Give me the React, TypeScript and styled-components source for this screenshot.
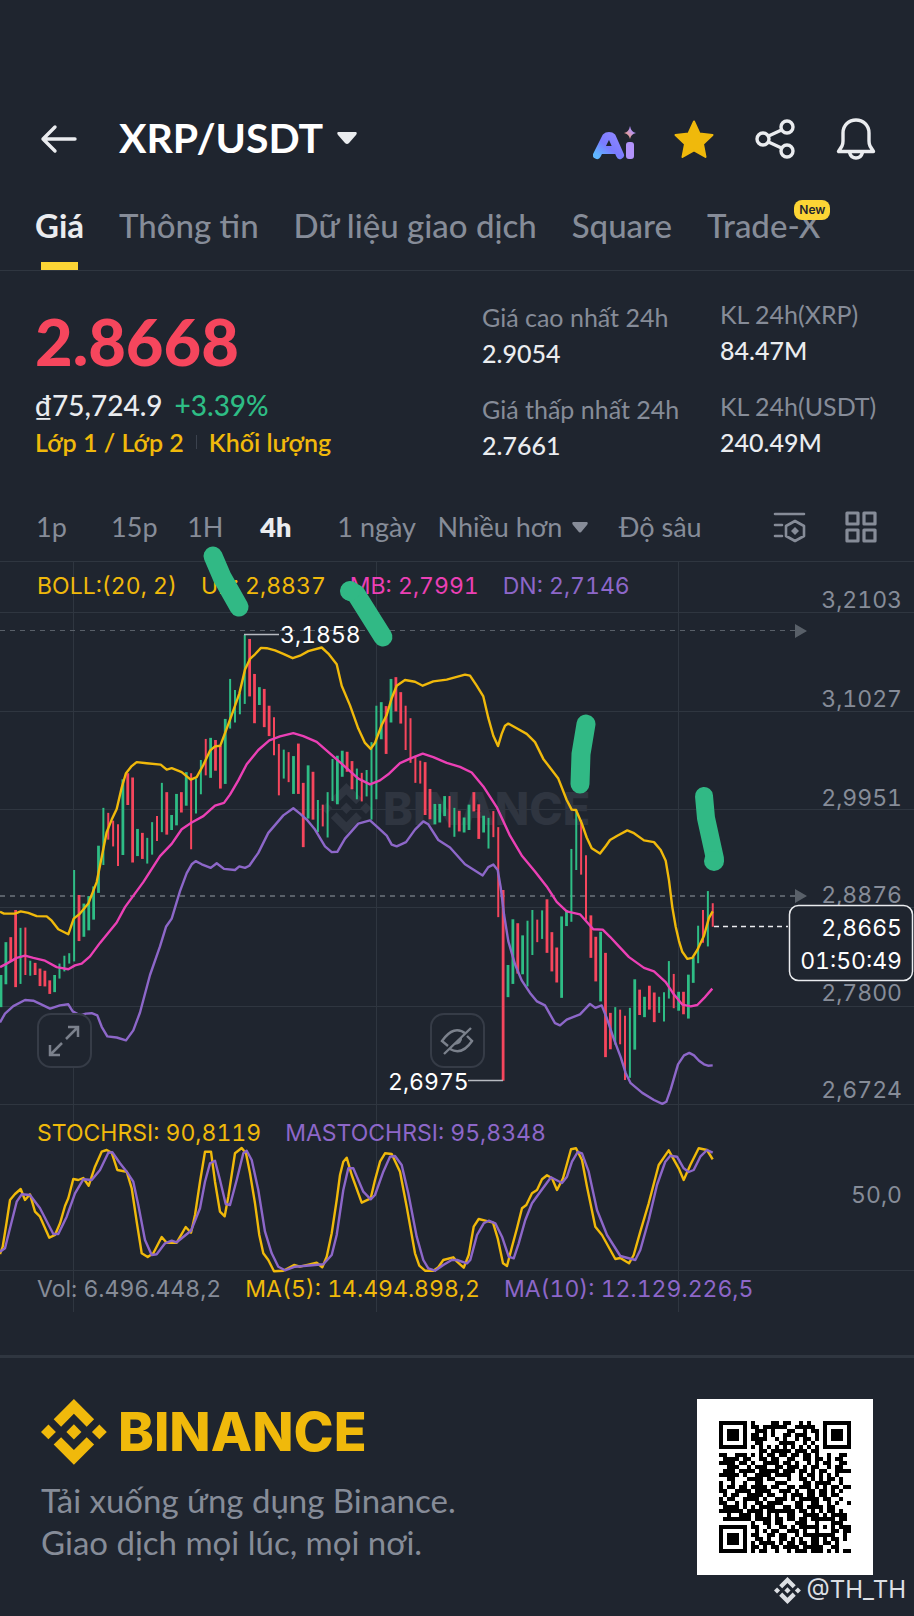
import React from "react";
import styled, { createGlobalStyle } from "styled-components";

const c = {
  bg: "#1f252f",
  line: "#2f3640",
  text: "#eaecef",
  white: "#ffffff",
  muted: "#868c98",
  up: "#2ebd85",
  down: "#f6465d",
  yellow: "#f0b90b",
  bright: "#fcd535",
  pink: "#eb40b5",
  purple: "#8d67c9",
};

const textFont = `"Lato", "Noto Sans", sans-serif`;
const chartFont = `"Inter", "Noto Sans", sans-serif`;

const GlobalStyle = createGlobalStyle`
  *, *::before, *::after { box-sizing: border-box; }
  body { margin: 0; background: ${c.bg}; }
  button { font: inherit; color: inherit; background: none; border: 0; padding: 0; cursor: pointer; }
  a { color: inherit; text-decoration: none; }
  svg { display: block; }
`;

const Page = styled.main`
  position: relative;
  min-height: 100vh;
  background: ${c.bg};
  color: ${c.text};
  font-family: ${textFont};
  overflow-x: hidden;
`;

const Header = styled.header`
  display: flex;
  align-items: center;
  padding: 112px 38px 0 40px;
`;

const IconButton = styled.button`
  display: grid;
  place-items: center;
  width: 40px;
  height: 54px;
`;

const PairButton = styled.button`
  display: flex;
  align-items: center;
  gap: 14px;
  margin-left: 39px;
  padding-bottom: 2px;
  color: ${c.white};
  font-size: 41px;
  line-height: 52px;
  font-weight: 700;
`;

const Actions = styled.div`
  display: flex;
  gap: 41px;
  margin-left: auto;
`;

const Tabs = styled.nav`
  display: flex;
  gap: 35px;
  margin-top: 41px;
  padding: 0 35px;
  border-bottom: 1px solid ${c.line};
  white-space: nowrap;
`;

const Tab = styled.a<{ $active?: boolean }>`
  position: relative;
  padding-bottom: 27px;
  font-size: 33px;
  line-height: 36px;
  font-weight: ${(p) => (p.$active ? 700 : 500)};
  color: ${(p) => (p.$active ? c.text : c.muted)};
  &::after {
    content: "";
    display: ${(p) => (p.$active ? "block" : "none")};
    position: absolute;
    left: 6px;
    right: 6px;
    bottom: 0;
    height: 8px;
    background: ${c.bright};
  }
`;

const NewBadge = styled.span`
  position: absolute;
  right: -10px;
  top: -7px;
  padding: 0 5px;
  border-radius: 8px;
  background: ${c.bright};
  color: #1f252f;
  font: 600 12px/20px ${chartFont};
`;

const Summary = styled.section`
  display: grid;
  grid-template-columns: 447fr 238fr 159fr;
  padding: 25px 35px 0;
`;

const PriceColumn = styled.div`
  padding-top: 11px;
`;

const LastPrice = styled.div`
  color: ${c.down};
  font-size: 65px;
  line-height: 68px;
  font-weight: 900;
`;

const FiatRow = styled.div`
  display: flex;
  gap: 12px;
  margin-top: 12px;
  font-size: 28px;
  line-height: 36px;
  font-weight: 500;
`;

const Change = styled.span`
  color: ${c.up};
`;

const TagRow = styled.div`
  display: flex;
  align-items: center;
  gap: 12px;
  margin-top: 1px;
  color: ${c.yellow};
  font-size: 25px;
  line-height: 36px;
  font-weight: 600;
`;

const TagDivider = styled.i`
  width: 1px;
  height: 14px;
  background: #3b424e;
`;

const Stats = styled.dl<{ $drop?: boolean }>`
  margin: 0;
  padding-top: ${(p) => (p.$drop ? 3 : 0)}px;
  font-size: 25px;
  line-height: 36px;
  white-space: nowrap;
`;

const StatName = styled.dt`
  color: ${c.muted};
`;

const StatValue = styled.dd`
  margin: 0 0 20px;
  font-weight: 500;
`;

const Periods = styled.div`
  display: grid;
  grid-template-columns: 75fr 76fr 73fr 77fr 100fr 181fr 154fr 72fr 32fr;
  align-items: center;
  justify-items: start;
  margin-top: 26px;
  padding: 0 37px 16px 36px;
  color: ${c.muted};
  font-size: 27px;
  line-height: 36px;
  white-space: nowrap;
`;

const Period = styled.button<{ $active?: boolean }>`
  display: flex;
  align-items: center;
  gap: 10px;
  color: ${(p) => (p.$active ? c.text : "inherit")};
  font-weight: ${(p) => (p.$active ? 800 : 400)};
`;

const Chart = styled.section`
  position: relative;
  padding-bottom: 43px;
  border-bottom: 3px solid ${c.line};
  font-variant-numeric: tabular-nums;
  svg text { font-family: ${chartFont}; }
`;

const Legend = styled.div<{ $top: number }>`
  position: absolute;
  left: 37px;
  top: ${(p) => p.$top}px;
  display: flex;
  gap: 24px;
  font-family: ${chartFont};
  font-size: 23px;
  line-height: 28px;
  white-space: nowrap;
`;

const LegendItem = styled.span<{ $color: string }>`
  color: ${(p) => p.$color};
`;

const Strokes = styled.svg`
  position: absolute;
  left: 0;
  top: 0;
  width: 100%;
  overflow: visible;
  pointer-events: none;
`;

const ChartButton = styled.button<{ $left: number }>`
  position: absolute;
  left: ${(p) => p.$left}%;
  top: 452px;
  display: grid;
  place-items: center;
  width: 55px;
  height: 55px;
  border: 2px solid #363c47;
  border-radius: 14px;
  background: ${c.bg};
`;

const Footer = styled.footer`
  display: flex;
  justify-content: space-between;
  padding: 41px 41px 41px;
`;

const Brand = styled.div`
  display: flex;
  align-items: center;
  gap: 11px;
  height: 66px;
  color: ${c.yellow};
  font: 800 54px/66px ${chartFont};
`;

const Tagline = styled.p`
  margin: 14px 0 0;
  color: ${c.muted};
  font-size: 33px;
  line-height: 42px;
`;

const QrCard = styled.div`
  display: grid;
  place-items: center;
  width: 176px;
  height: 176px;
  background: #fff;
`;

const Handle = styled.div`
  position: absolute;
  right: 8px;
  bottom: 8px;
  display: flex;
  align-items: center;
  gap: 6px;
  color: #dcdfe3;
  font: 400 24px/36px ${chartFont};
`;

/* Candles, oldest first: [high, low, kind]. Capitals have a wide body; g rises, r falls. */
const candles: [number, number, string][] = [
  [1190,1280,"G"],[1098,1216,"G"],[1084,1152,"R"],[1008,1224,"R"],[1058,1215,"g"],[1057,1190,"r"],[1150,1192,"g"],[1156,1190,"R"],[1172,1221,"R"],[1178,1222,"R"],
  [1205,1243,"R"],[1190,1238,"G"],[1158,1200,"g"],[1136,1180,"g"],[1129,1158,"g"],[896,1152,"g"],[966,1095,"R"],[990,1083,"G"],[969,1065,"G"],[942,1035,"G"],
  [828,960,"G"],[722,882,"g"],[736,811,"r"],[758,830,"r"],[768,885,"r"],[642,854,"G"],[625,714,"R"],[637,875,"R"],[781,857,"G"],[792,865,"R"],
  [806,878,"g"],[762,853,"g"],[745,815,"r"],[652,790,"g"],[678,797,"R"],[742,784,"G"],[683,771,"G"],[678,735,"R"],[622,716,"G"],[625,838,"r"],
  [640,738,"g"],[588,684,"g"],[529,631,"r"],[526,638,"G"],[532,618,"R"],[548,668,"R"],[473,655,"G"],[361,500,"g"],[392,483,"g"],[400,460,"g"],
  [238,431,"g"],[249,410,"R"],[347,485,"R"],[384,434,"G"],[389,496,"R"],[436,521,"R"],[468,575,"r"],[543,687,"r"],[559,640,"g"],[566,650,"r"],
  [577,683,"G"],[542,683,"R"],[652,832,"R"],[603,752,"G"],[621,755,"R"],[700,790,"g"],[713,774,"r"],[678,805,"g"],[585,703,"g"],[576,712,"G"],
  [562,635,"G"],[565,621,"R"],[591,670,"R"],[612,698,"g"],[624,704,"r"],[616,690,"g"],[538,755,"g"],[436,698,"g"],[426,530,"G"],[437,571,"R"],
  [361,483,"G"],[356,452,"R"],[398,486,"R"],[436,560,"r"],[471,596,"r"],[576,652,"r"],[590,654,"r"],[594,742,"R"],[669,754,"R"],[711,768,"G"],
  [711,763,"G"],[689,745,"G"],[689,777,"r"],[722,803,"g"],[730,788,"R"],[749,791,"G"],[713,784,"G"],[678,732,"R"],[712,809,"R"],[744,791,"G"],
  [750,836,"g"],[731,804,"r"],[776,1028,"r"],[952,1486,"R"],[1162,1252,"G"],[1034,1215,"G"],[1045,1186,"R"],[1079,1188,"G"],[1038,1222,"g"],[1008,1134,"g"],
  [1035,1098,"r"],[1009,1089,"g"],[978,1128,"R"],[1070,1180,"R"],[1113,1211,"R"],[1026,1254,"G"],[1008,1053,"G"],[837,1041,"g"],[726,896,"g"],[756,909,"r"],
  [855,1035,"r"],[1023,1142,"R"],[1083,1208,"R"],[1069,1264,"G"],[1128,1420,"R"],[1296,1398,"R"],[1280,1385,"g"],[1287,1384,"r"],[1304,1484,"r"],[1282,1478,"g"],
  [1202,1399,"G"],[1231,1302,"R"],[1251,1308,"G"],[1220,1287,"R"],[1239,1322,"R"],[1251,1296,"g"],[1238,1320,"g"],[1151,1256,"g"],[1187,1283,"r"],[1237,1290,"G"],
  [1237,1300,"R"],[1189,1312,"G"],[1140,1212,"G"],[1052,1157,"g"],[1008,1100,"r"],[955,1110,"g"],[989,1055,"r"],
];

const upper = "0,1013 12,1018 45,1018 62,1012 85,1016 110,1025 140,1026 155,1038 175,1062 205,1076 221,1032 240,1018 265,990 290,930 305,860 320,790 335,755 350,725 365,665 378,625 395,605 410,594 440,597 482,601 500,615 515,611 545,622 572,643 590,636 610,602 630,562 645,550 661,548 680,500 700,450 718,402 735,335 750,305 765,292 783,274 800,275 825,281 850,291 878,303 900,296 925,283 965,273 985,290 1010,320 1025,380 1050,435 1075,500 1095,540 1112,557 1125,540 1145,490 1160,462 1175,415 1190,380 1215,364 1245,369 1268,380 1300,368 1340,363 1395,349 1410,352 1430,380 1450,410 1465,470 1480,520 1494,549 1505,515 1515,492 1525,486 1550,499 1580,515 1605,538 1630,585 1675,640 1700,700 1715,727 1728,728 1745,765 1760,805 1775,835 1800,850 1818,828 1830,812 1852,800 1882,785 1902,793 1932,813 1962,818 1982,840 1997,870 2007,925 2017,1000 2027,1055 2037,1095 2047,1125 2062,1145 2077,1142 2092,1120 2112,1080 2127,1030 2138,1012";
const middle = "0,1168 20,1158 50,1142 75,1136 100,1142 135,1150 170,1168 205,1174 225,1163 245,1158 270,1138 300,1100 350,1043 375,1000 430,930 480,857 515,823 545,782 575,763 610,745 645,716 672,708 690,685 715,645 740,600 775,560 808,533 840,522 880,513 910,521 950,537 980,562 1010,586 1045,615 1075,640 1110,656 1140,645 1165,628 1200,597 1230,584 1268,570 1300,580 1340,596 1380,607 1415,623 1450,662 1490,720 1530,800 1565,855 1605,900 1640,942 1670,985 1700,1012 1740,1020 1780,1062 1808,1063 1830,1083 1852,1105 1887,1140 1932,1170 1962,1180 1997,1210 2022,1245 2047,1273 2072,1278 2092,1274 2112,1255 2137,1228";
const lower = "0,1323 15,1298 40,1277 75,1260 100,1262 130,1275 150,1284 180,1275 205,1272 218,1292 240,1303 258,1298 275,1297 292,1303 305,1335 322,1362 350,1365 378,1373 400,1345 420,1295 450,1190 480,1110 498,1055 515,1032 540,955 560,905 575,880 587,871 605,880 632,890 650,877 672,893 705,896 718,886 735,890 748,884 775,848 805,792 850,743 880,723 900,738 920,755 945,783 975,830 995,846 1012,845 1035,808 1075,766 1110,757 1135,778 1160,800 1175,825 1190,830 1218,818 1245,783 1270,760 1285,768 1315,812 1350,833 1395,880 1448,911 1465,888 1480,881 1493,896 1502,945 1512,1020 1525,1095 1545,1160 1565,1205 1590,1240 1611,1264 1635,1275 1665,1325 1680,1331 1700,1315 1740,1300 1770,1271 1786,1282 1805,1275 1820,1310 1842,1370 1862,1420 1877,1465 1892,1493 1927,1520 1962,1540 1987,1551 1999,1545 2012,1510 2034,1440 2052,1415 2068,1408 2082,1415 2097,1430 2112,1440 2124,1444 2138,1443";
const stoch = "0,462 8,440 20,365 30,300 45,282 62,267 75,300 90,283 105,335 120,350 148,413 165,405 180,370 195,318 205,295 220,237 235,240 250,234 266,257 285,200 305,155 320,150 335,158 352,210 380,215 395,265 410,365 425,460 443,471 460,460 485,411 500,428 530,428 557,381 573,398 585,345 600,245 615,155 633,155 645,245 660,335 674,349 685,290 705,160 725,144 738,160 750,220 765,310 778,405 790,460 805,480 822,514 850,512 882,495 900,500 950,488 967,502 980,470 995,400 1010,300 1020,225 1030,185 1040,173 1055,225 1085,308 1112,295 1125,240 1140,185 1155,160 1175,162 1200,215 1220,320 1245,460 1258,497 1275,512 1300,512 1315,502 1330,480 1360,472 1371,485 1391,503 1406,465 1421,380 1436,357 1456,362 1479,368 1493,415 1509,490 1521,498 1536,440 1551,385 1566,325 1579,315 1596,280 1611,270 1626,238 1641,226 1656,235 1671,270 1689,235 1713,148 1728,145 1746,180 1761,260 1786,380 1806,405 1846,477 1861,474 1887,490 1901,465 1921,395 1946,310 1976,195 2006,151 2036,205 2051,240 2071,195 2096,145 2121,150 2138,178";
const maStoch = "0,455 15,445 30,385 50,305 65,283 90,285 120,325 160,402 175,402 200,350 225,280 250,238 275,240 300,210 325,158 337,157 360,190 380,215 400,245 415,315 435,420 455,465 470,463 495,430 515,422 530,427 573,392 600,325 615,245 630,190 645,182 660,240 677,312 690,315 710,240 730,160 740,152 755,180 775,270 795,395 815,460 835,500 855,511 885,500 970,493 995,465 1010,405 1030,270 1045,205 1060,205 1090,275 1112,298 1125,285 1150,215 1170,170 1185,168 1205,195 1225,280 1250,410 1270,480 1285,505 1305,512 1330,495 1355,480 1371,480 1401,490 1411,480 1431,405 1451,370 1466,362 1486,370 1506,410 1526,470 1541,475 1556,430 1576,360 1596,310 1621,275 1653,232 1686,249 1701,230 1716,185 1733,156 1746,160 1766,215 1791,330 1821,405 1861,468 1906,480 1921,450 1946,360 1971,255 1996,185 2011,167 2031,170 2051,205 2066,216 2081,210 2101,170 2121,150 2138,158";

/* Source units of the two panels to chart units. */
const plot = (points: string, scaleY: number, offsetY: number) =>
  points
    .split(" ")
    .map((pair) => {
      const [x, y] = pair.split(",").map(Number);
      return `${(x / 3).toFixed(1)},${(y / scaleY + offsetY).toFixed(1)}`;
    })
    .join(" ");
const priceY = (v: number) => v / 2.8 - 11;

const axis: [string, number, number][] = [
  ["3,2103", 47, 51],
  ["3,1027", 146, 150],
  ["2,9951", 245, 248],
  ["2,8876", 342, 346],
  ["2,7800", 440, 445],
  ["2,6724", 537, 543],
];

const BinanceMark = ({ size }: { size: number }) => (
  <svg width={size} height={size} viewBox="0 0 127 127" fill="currentColor" aria-hidden="true">
    <BinancePaths />
  </svg>
);

const BinancePaths = () => (
  <>
    <path d="M38.7 53.2 63.3 28.6 87.9 53.2 102.2 38.9 63.3 0 24.4 38.9Z" />
    <path d="M0 63.3 14.3 49 28.6 63.3 14.3 77.6Z" />
    <path d="M38.7 73.4 63.3 98 87.9 73.4 102.2 87.7 63.3 126.6 24.4 87.7Z" />
    <path d="M98 63.3 112.3 49 126.6 63.3 112.3 77.6Z" />
    <path d="M77.8 63.3 63.3 48.8 48.8 63.3 63.3 77.8Z" />
  </>
);

const PriceChart = () => (
  <svg width="100%" viewBox="0 0 914 751" role="img" aria-label="XRP/USDT 4h">
    <g stroke={c.line} strokeWidth="1">
      {axis.map(([, , y]) => (
        <line key={y} x1="0" x2="914" y1={y + 0.5} y2={y + 0.5} />
      ))}
      <line x1="0" x2="914" y1="0.5" y2="0.5" />
      <line x1="0" x2="914" y1="709.5" y2="709.5" />
      {[73, 376, 678].map((x) => (
        <line key={x} x1={x + 0.5} x2={x + 0.5} y1="0" y2="751" />
      ))}
    </g>
    <g fill="#2f3540">
      <g transform="translate(321 222) scale(.4)">
        <BinancePaths />
      </g>
      <text x="383" y="264" fontSize="45" fontWeight="800">BINANCE</text>
    </g>
    <g stroke="#596069" strokeWidth="2" strokeDasharray="5 5">
      <line x1="0" x2="795" y1="69.5" y2="69.5" strokeWidth="1" />
      <line x1="0" x2="795" y1="335" y2="335" />
    </g>
    <path d="M795 63 807 70 795 77ZM795 328 807 335 795 342Z" fill="#596069" />
    {candles.map(([high, low, kind], i) => (
      <line
        key={i}
        x1={1 + i * 4.875}
        x2={1 + i * 4.875}
        y1={priceY(high)}
        y2={priceY(low)}
        stroke={kind.toLowerCase() === "g" ? c.up : c.down}
        strokeWidth={kind === kind.toUpperCase() ? 2.8 : 2}
      />
    ))}
    <g fill="none" strokeWidth="2.4" strokeLinejoin="round">
      <polyline points={plot(lower, 2.8, -11)} stroke={c.purple} />
      <polyline points={plot(middle, 2.8, -11)} stroke={c.pink} />
      <polyline points={plot(upper, 2.8, -11)} stroke={c.yellow} />
      <polyline points={plot(stoch, 3, 539)} stroke={c.yellow} />
      <polyline points={plot(maStoch, 3, 539)} stroke={c.purple} />
    </g>
    <g fill={c.muted} fontSize="23" textAnchor="end">
      {axis.map(([label, y]) => (
        <text key={label} x="902" y={y}>{label}</text>
      ))}
      <text x="902" y="642">50,0</text>
    </g>
    <g stroke="#b7bbc1" strokeWidth="1.5">
      <line x1="244" x2="279" y1="73.5" y2="73.5" />
      <line x1="468" x2="503" y1="519.5" y2="519.5" />
      <line x1="714" x2="788" y1="365.5" y2="365.5" strokeDasharray="5 4" stroke={c.text} />
    </g>
    <rect x="789.5" y="344.5" width="123" height="75" rx="9" fill={c.bg} stroke={c.text} strokeWidth="1.5" />
    <g fill={c.white} fontSize="23">
      <text x="280" y="82">3,1858</text>
      <text x="388" y="529">2,6975</text>
      <g textAnchor="end">
        <text x="902" y="375">2,8665</text>
        <text x="902" y="408">01:50:49</text>
      </g>
    </g>
  </svg>
);

const Annotations = () => (
  <Strokes viewBox="0 0 914 751" aria-hidden="true">
    <g fill="none" stroke="#31b985" strokeWidth="19" strokeLinecap="round" strokeLinejoin="round">
      <path d="M213-5 222 16 239 46" />
      <path d="M350 30 356 33 383 76" />
      <path d="M586 163 581 193 580 223" />
      <path d="M704 235 706 257 715 298" strokeWidth="18" />
    </g>
    <circle cx="350" cy="30" r="10" fill="#31b985" />
    <circle cx="714" cy="300" r="10" fill="#31b985" />
  </Strokes>
);

const qrRows = [
  "#######.#....##.##..#.#...#######",
  "#.....#.##.######..#####..#.....#",
  "#.###.#..###.#...##..#.##.#.###.#",
  "#.###.#.##.#.#..##.###..#.#.###.#",
  "#.###.#.####..#.#..#.##.#.#.###.#",
  "#.....#..##....####..#.#..#.....#",
  "#######.#.#.#.#.#.#.#.#.#.#######",
  "..........##.#####.###.##........",
  "##..###.#.#.##.##.##.##.#..#..##.",
  ".####.##..##.##..##..##.##.#.##..",
  "####.##.#..####.##.#..#.#.##..##.",
  "..###..#.###..##.###.#.##..#.##..",
  ".###.####.#####.###.##.#.##..####",
  "#####.#..####.####..#.##.#.#.#...",
  "..##...####.##...#..##.#.#.##.#..",
  "#..#..#..##...###....##.####..#..",
  "#.##.##.####.##..##.###.#.#.##.##",
  "##..####.####..###.#..##.##.#.#..",
  ".#.##..####.##..#.###.##.##.##...",
  "#.##..####.#..###.#.#####.##..#..",
  "##..#.#..##.####...##..##..#.#..#",
  ".####.#.#.####..##.##.####.##....",
  "######.####.#######.##.#.#.##.#..",
  "..#..###.##.#.#..##..####.#.####.",
  ".#######.####.##.##.##.######.##.",
  "........#..##.##...###..#...###..",
  "#######.##..#..##.#.#####.#.#.###",
  "#.....#..#.#.##..###.#..#...##.##",
  "#.###.#.##..##.##..#.########..#.",
  "#.###.#..##.#..##.#.#..##.#.##.#.",
  "#.###.#.#.####.#.##.##.##.##.#...",
  "#.....#.##.#.##.####.#####..##...",
  "#######.#.##..#..#.###.###.#.#.##",
];

const QrCode = () => (
  <svg width="132" height="132" viewBox="0 0 33 33" shapeRendering="crispEdges" role="img" aria-label="QR">
    <path
      d={qrRows
        .flatMap((row, y) => [...row].map((m, x) => (m === "#" ? `M${x} ${y}h1v1h-1z` : "")))
        .join("")}
    />
  </svg>
);

const periods = ["1p", "15p", "1H", "4h", "1 ngày"];

export default function App() {
  return (
    <Page>
      <GlobalStyle />
      <Header>
        <IconButton aria-label="Back">
          <svg width="40" height="34" viewBox="0 0 40 34" fill="none" stroke={c.text} strokeWidth="3.4" strokeLinecap="round" strokeLinejoin="round">
            <path d="M15 5 3 17 15 29M3 17H35" />
          </svg>
        </IconButton>
        <PairButton>
          XRP/USDT
          <svg width="20" height="12" viewBox="0 0 20 12" fill={c.text}>
            <path d="M1 0H19Q20.500 1 19 3L12 11Q10 13 8 11L1 3Q-.5 1 1 0Z" />
          </svg>
        </PairButton>
        <Actions>
          <IconButton aria-label="Ai">
            <svg width="44" height="42" viewBox="0 0 44 42">
              <defs>
                <linearGradient id="ai" x1="0" x2="1" y1="1" y2="0">
                  <stop offset="0" stopColor="#5fb6ff" />
                  <stop offset=".45" stopColor="#7a7bff" />
                  <stop offset="1" stopColor="#8e86ff" />
                </linearGradient>
                <linearGradient id="spark" x1="0" x2="1" y1="1" y2="0">
                  <stop offset=".2" stopColor="#f2a184" />
                  <stop offset=".7" stopColor="#ad90ff" />
                </linearGradient>
              </defs>
              <path d="M4 37 13 19Q14 18 16 18Q18 18 19 19L27 37M10 32H22" fill="none" stroke="url(#ai)" strokeWidth="8" strokeLinecap="round" strokeLinejoin="round" />
              <rect x="33" y="24" width="8" height="17" rx="3" fill="#b293fb" />
              <path d="M37 8Q38 14 43 15 38 16 37 21 36 16 31 15 36 14 37 8Z" fill="url(#spark)" />
            </svg>
          </IconButton>
          <IconButton aria-label="Favorite">
            <svg width="40" height="40" viewBox="0 0 40 40" fill={c.yellow} stroke={c.yellow} strokeWidth="2" strokeLinejoin="round">
              <path d="M20 2.500 25.500 14.500 38.500 16 29 25 31.500 38 20 31.500 8.500 38 11 25 1.500 16 14.500 14.500Z" />
            </svg>
          </IconButton>
          <IconButton aria-label="Share">
            <svg width="40" height="40" viewBox="0 0 40 40" fill="none" stroke={c.text} strokeWidth="3.4">
              <circle cx="8" cy="20" r="6" />
              <circle cx="32" cy="8" r="6" />
              <circle cx="32" cy="32" r="6" />
              <path d="M13.500 17 26.500 11M13.500 23 26.500 29" />
            </svg>
          </IconButton>
          <IconButton aria-label="Notifications">
            <svg width="40" height="42" viewBox="0 0 40 42" fill="none" stroke={c.text} strokeWidth="3.4" strokeLinecap="round" strokeLinejoin="round">
              <path d="M2.500 33.500H37.500L34 28Q33 26 33 23V15C33 7 27 2 20 2S7 7 7 15V23Q7 26 6 28ZM13.500 34.500Q15 40 20 40T26.500 34.500" />
            </svg>
          </IconButton>
        </Actions>
      </Header>

      <Tabs>
        <Tab href="#gia" $active>Giá</Tab>
        <Tab href="#info">Thông tin</Tab>
        <Tab href="#data">Dữ liệu giao dịch</Tab>
        <Tab href="#square">Square</Tab>
        <Tab href="#tradex">
          Trade-X<NewBadge>New</NewBadge>
        </Tab>
      </Tabs>

      <Summary>
        <PriceColumn>
          <LastPrice>2.8668</LastPrice>
          <FiatRow>
            <span>₫75,724.9</span>
            <Change>+3.39%</Change>
          </FiatRow>
          <TagRow>
            <a href="#layer">Lớp 1 / Lớp 2</a>
            <TagDivider />
            <a href="#volume">Khối lượng</a>
          </TagRow>
        </PriceColumn>
        <Stats $drop>
          <StatName>Giá cao nhất 24h</StatName>
          <StatValue>2.9054</StatValue>
          <StatName>Giá thấp nhất 24h</StatName>
          <StatValue>2.7661</StatValue>
        </Stats>
        <Stats>
          <StatName>KL 24h(XRP)</StatName>
          <StatValue>84.47M</StatValue>
          <StatName>KL 24h(USDT)</StatName>
          <StatValue>240.49M</StatValue>
        </Stats>
      </Summary>

      <Periods>
        {periods.map((p) => (
          <Period key={p} $active={p === "4h"}>{p}</Period>
        ))}
        <Period>
          Nhiều hơn
          <svg width="16" height="11" viewBox="0 0 16 11" fill={c.muted}>
            <path d="M1 0H15Q16.500 1 15 3L10 9Q8 12 6 9L1 3Q-.5 1 1 0Z" />
          </svg>
        </Period>
        <Period>Độ sâu</Period>
        <Period aria-label="Indicators">
          <svg width="33" height="32" viewBox="0 0 33 32" fill="none" stroke={c.muted} strokeWidth="2.600" strokeLinecap="round" strokeLinejoin="round">
            <path d="M2 3H31M2 14H9M2 25H9M22 10 31 15V25L22 30 13 25V15Z" />
            <path d="M22 16 26 20 22 24 18 20Z" fill={c.muted} stroke="none" />
          </svg>
        </Period>
        <Period aria-label="Layout">
          <svg width="32" height="32" viewBox="0 0 32 32" fill="none" stroke={c.muted} strokeWidth="3.2" strokeLinejoin="round">
            <path d="M2 2H13V13H2ZM19 2H30V13H19ZM2 19H13V30H2ZM19 19H30V30H19Z" />
          </svg>
        </Period>
      </Periods>

      <Chart>
        <PriceChart />
        <Legend $top={11}>
          <LegendItem $color={c.yellow}>BOLL:(20, 2)</LegendItem>
          <LegendItem $color={c.yellow}>UP: 2,8837</LegendItem>
          <LegendItem $color={c.pink}>MB: 2,7991</LegendItem>
          <LegendItem $color={c.purple}>DN: 2,7146</LegendItem>
        </Legend>
        <Legend $top={558}>
          <LegendItem $color={c.yellow}>STOCHRSI: 90,8119</LegendItem>
          <LegendItem $color={c.purple}>MASTOCHRSI: 95,8348</LegendItem>
        </Legend>
        <Legend $top={714}>
          <LegendItem $color={c.muted}>Vol: 6.496.448,2</LegendItem>
          <LegendItem $color={c.yellow}>MA(5): 14.494.898,2</LegendItem>
          <LegendItem $color={c.purple}>MA(10): 12.129.226,5</LegendItem>
        </Legend>
        <ChartButton $left={4} aria-label="Fullscreen">
          <svg width="34" height="32" viewBox="0 0 34 32" fill="none" stroke="#7b818c" strokeWidth="2.500">
            <path d="M19 14 31 2M21 2H31V12M15 18 3 30M3 20V30H13" />
          </svg>
        </ChartButton>
        <ChartButton $left={47} aria-label="Hide">
          <svg width="34" height="30" viewBox="0 0 34 30" fill="none" stroke="#7b818c" strokeWidth="2.400">
            <path d="M8 20 2 15Q14-2 26 8M27 10 32 15Q22 30 10 23M4 28 31 2" />
            <path d="M14 19 22 11Q23 18 14 19Z" fill="#7b818c" stroke="none" />
          </svg>
        </ChartButton>
        <Annotations />
      </Chart>

      <Footer>
        <div>
          <Brand>
            <BinanceMark size={66} />
            BINANCE
          </Brand>
          <Tagline>
            Tải xuống ứng dụng Binance.
            <br />
            Giao dịch mọi lúc, mọi nơi.
          </Tagline>
        </div>
        <QrCard>
          <QrCode />
        </QrCard>
      </Footer>
      <Handle>
        <BinanceMark size={27} />
        @TH_TH
      </Handle>
    </Page>
  );
}
